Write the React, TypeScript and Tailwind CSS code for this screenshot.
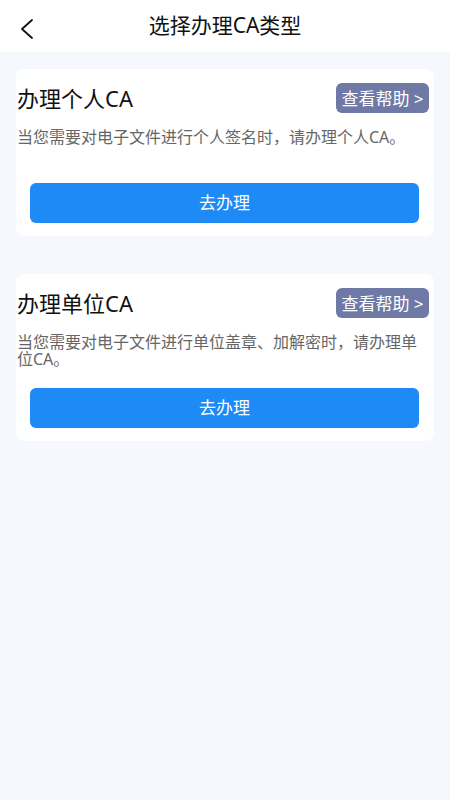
import React from "react";

const font = { fontFamily: '"Noto Sans", "Noto Sans CJK SC", sans-serif' };

function Card({ title, desc }: { title: string; desc: string }) {
  return (
    <div className="mx-4 rounded-lg bg-white pt-[14px] pb-[13px] pl-px pr-[5px]">
      <div className="flex h-[30px] items-center justify-between">
        <div className="text-[22px] leading-none text-[#111]">{title}</div>
        <div className="flex h-[30px] w-[93px] items-center justify-center rounded-md bg-[#6f79a6] text-[17px] leading-none text-white">
          查看帮助 &gt;
        </div>
      </div>
      <div className="mt-4 h-[34px] pr-1 text-[16px] leading-[17px] text-[#666]">{desc}</div>
      <div className="mt-5 ml-[13px] mr-[10px]">
        <div className="flex h-10 items-center justify-center rounded-md bg-[#1e8af5] text-[17px] text-white">
          去办理
        </div>
      </div>
    </div>
  );
}

export default function App() {
  return (
    <div className="min-h-[800px] w-[450px] bg-[#f5f8fd]" style={font}>
      <div className="relative flex h-[52px] items-center justify-center bg-white">
        <svg className="absolute left-[18px] top-[18px]" width="18" height="22" viewBox="0 0 18 22" fill="none">
          <path d="M14 2 L4 11 L14 20" stroke="#111" strokeWidth="1.8" strokeLinecap="round" strokeLinejoin="round" />
        </svg>
        <div className="text-[21px] text-[#111]">选择办理CA类型</div>
      </div>
      <div className="pt-[17px]">
        <Card title="办理个人CA" desc="当您需要对电子文件进行个人签名时，请办理个人CA。" />
        <div className="h-[38px]" />
        <Card title="办理单位CA" desc="当您需要对电子文件进行单位盖章、加解密时，请办理单位CA。" />
      </div>
    </div>
  );
}
